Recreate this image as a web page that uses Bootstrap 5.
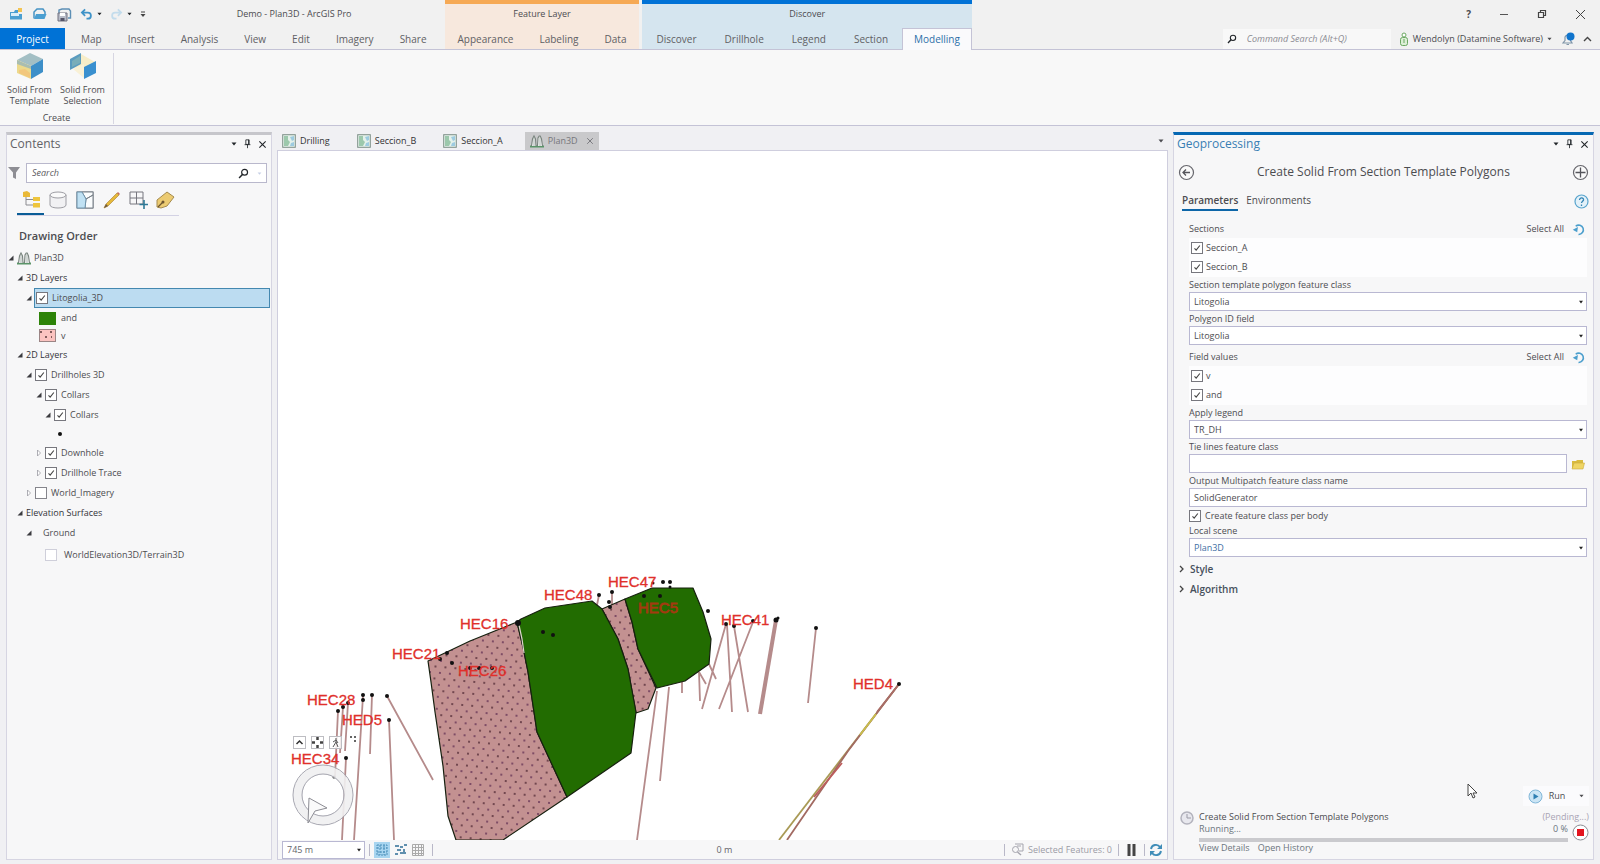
<!DOCTYPE html>
<html lang="en">
<head>
<meta charset="utf-8">
<meta name="viewport" content="width=device-width, initial-scale=1">
<title>Demo - Plan3D - ArcGIS Pro</title>
<link href="https://cdn.jsdelivr.net/npm/bootstrap@5.3.0/dist/css/bootstrap.min.css" rel="stylesheet">
<style>
  :root { --ink:#4c4c50; --line:#c4c3d6; --pane:#f7f7f8; }
  body { font-family:"Open Sans","Noto Sans",sans-serif; font-size:9px; line-height:12px; color:var(--ink); background:#f0f0f3; }
  a { color:inherit; text-decoration:none; }
  button { color:inherit; background:none; border:0; padding:0; display:inline-flex; align-items:center; justify-content:center; }
  svg { display:block; flex:none; }
  .app { min-height:100vh; }

  /* title bar and ribbon tabs */
  .topbar { background:#f1f1f1; border-bottom:1px solid var(--line); font-size:10px; }
  .maintabs { padding-right:5px; }
  .cap { height:28px; }
  .docname { font-size:9px; margin-right:88px; }
  .undo { color:#3f93c8; }
  .redo { color:#c3dcec; }
  .user { font-size:9px; margin-right:2px; }
  .rtabs { height:21px; }
  .rtabs a { padding:0 13px; line-height:23px; color:#606064; }
  .rtabs a.file { width:65px; padding:0; text-align:center; background:#0072d6; color:#fff; margin-right:3px; }
  .ctx { border-top:4px solid; margin-right:3px; }
  .ctx .cap { height:24px; font-size:9px; line-height:20px; text-align:center; }
  .ctx-layer { background:#f7e8dd; border-color:#f6a954; }
  .ctx-disc { background:#d5e5ef; border-color:#0072d6; }
  .ctx-disc .rtabs a { padding:0 14px; }
  .ctx-disc .rtabs a.on { background:#fafafc; color:#2c6fa8; border:1px solid var(--line); border-bottom:0; margin-bottom:-1px; padding:0 11px; line-height:21px; }
  .find { width:168px; height:20px; background:#f8f8f8; border:0; font-style:italic; font-size:9px; color:#777; outline:0; }
  .find::placeholder { color:#8a8a92; }
  .winbtns { gap:28px; padding-right:14px; }
  .ribbon { background:#f8f8f8; border-bottom:1px solid var(--line); height:76px; }
  .rgroup { width:114px; border-right:1px solid #d7d6e2; margin:3px 0 1px; }
  .rgroup > .d-flex { padding-left:3px; }
  .rbtn { width:53px; flex-direction:column; line-height:11px; gap:4px; }

  /* panes */
  .workspace { gap:5px; padding:6px; padding-bottom:4px; }
  .pane { background:var(--pane); border:1px solid #d6d5e2; }
  .pane-left { width:266px; border-top:3px solid #c6c6cb; }
  .pane-right { width:421px; border-top:3px solid #0668b3; position:relative; }
  .pane h2 { font-size:12px; line-height:18px; margin:0; font-weight:400; color:#626266; }
  .pane-right h2 { color:#3a7fb4; }
  .pane-head { height:20px; padding:0 4px 2px 3px; }
  .pane .tools { gap:7px; }
  .boxed { border:1px solid #b9b8cc; background:#fff; height:20px; }
  .boxed input { border:0; outline:0; background:none; font-size:9px; font-style:italic; padding:0 5px; min-width:0; }
  .boxed input::placeholder { color:#5a5a60; }
  .faint { color:#c5cfe5; }
  .viewtabs { margin-left:10px; width:162px; border-bottom:1px solid #d3d2e4; }
  .viewtabs button { width:27px; height:28px; padding-bottom:2px; }
  .viewtabs .on { border-bottom:2px solid #0a5d97; margin-bottom:-1px; }
  h3 { font-size:11px; line-height:16px; font-weight:600; margin:0; }

  /* layer tree */
  .tree { list-style:none; margin:4px 0 0; padding:0; }
  .tree li { height:20px; display:flex; align-items:center; gap:3px; }
  .tree .l0 { padding-left:1px; } .tree .l1 { padding-left:10px; } .tree .l2 { padding-left:19px; }
  .tree .l3 { padding-left:29px; } .tree .l4 { padding-left:38px; }
  .tree .sym { padding-left:32px; gap:5px; height:18px; }
  .tree .fill1 { height:20px; } .tree .fill2 { height:15px; }
  .tree .fill2 + li { margin-top:2px; }
  .tree .leaf { padding-left:38px; height:24px; gap:6px; }
  .tree label { padding-left:1px; }
  .tree .row-on { flex:1; height:20px; display:flex; align-items:center; gap:3px; background:#bcdcf1; border:1px solid #4488b0; margin:0 1px 0 -1px; padding-left:1px; }
  .tw { width:6px; height:8px; }
  .tree strong { font-weight:500; color:#333338; }
  .form-check-input { width:12px; height:12px; margin:0; border:1px solid #85858c; background-color:#fff; flex:none; }
  .form-check-input[type=checkbox] { border-radius:0; }
  .form-check-input:checked { background-color:#fff; border-color:#77777e;
    background-image:url("data:image/svg+xml,%3Csvg xmlns='http://www.w3.org/2000/svg' viewBox='0 0 12 12'%3E%3Cpath d='M3 6.4 5 8.6 9.4 3' fill='none' stroke='%23444' stroke-width='1.3'/%3E%3C/svg%3E"); }
  .form-check-input.dim { border-color:#cfcfda; }

  /* map view */
  .doctabs { height:18px; padding-left:5px; gap:23px; }
  .doctabs a { display:flex; align-items:center; gap:4px; color:#333; padding-right:4px; }
  .doctabs a.on { background:#c9c9cb; color:#77777c; padding:0 5px; gap:4px; margin-left:-5px; height:18px; }
  .view { border:1px solid #cfcede; background:#fff; min-height:0; }
  .scene { position:relative; overflow:hidden; min-height:0; background:#fff; }
  .scene > svg { position:absolute; left:0; top:0; width:100%; height:100%; }
  .hud { position:absolute; left:15px; bottom:91px; gap:5px; }
  .hud button { width:13px; height:13px; background:#ffffffcc; border:1px solid #bdbdc2; }
  .status { height:19px; background:#f7f7f8; color:#66666c; gap:4px; padding:0 4px; }
  .status .off { color:#9c9ca6; margin:0 2px; }
  .status .zoomtxt { padding-left:12px; }
  .status .pause { margin:0 4px; }
  .vr { width:1px; height:12px; min-height:0; align-self:center; background:#b9b8c8; opacity:1; }
  .status .hit { background:#a8d5f0; width:16px; height:16px; }

  .form-select, .form-control { font-size:9px; line-height:12px; height:19px; min-height:0; border:1px solid #b9b8d2; border-radius:0; background-color:#fff; color:var(--ink); padding:0 4px; box-shadow:none; }
  .form-select { background-image:url("data:image/svg+xml,%3Csvg xmlns='http://www.w3.org/2000/svg' viewBox='0 0 6 4'%3E%3Cpath d='M1 .8h4L3 3.4z' fill='%23222'/%3E%3C/svg%3E"); background-size:6px 4px; background-position:right 2px center; }
  .form-select.scale { color:#66666c; width:83px; height:18px; }
  .form-select.linked { color:#3f6fa5; }

  /* geoprocessing form */
  .gp-title { font-size:12px; line-height:18px; }
  .gp-tabs { gap:8px; font-size:10px; margin-top:10px; }
  .gp-tabs a { line-height:18px; height:20px; }
  .gp-tabs .on { font-weight:600; border-bottom:2px solid #0d66a8; }
  .gp-form { padding:6px 6px 0 15px; }
  .gp-form .lbl { display:block; line-height:12px; height:13px; margin-top:2px; }
  .gp-form .solo { display:flex; align-items:center; gap:4px; padding:3px 0; }
  .ticks { background:#fdfdfe; height:39px; padding-left:2px; }
  .ticks label { height:19px; display:flex; align-items:center; gap:3px; }
  .listhead { height:18px; padding-right:2px; }
  .mid { margin-top:3px; }
  .folds { margin-top:2px; }
  .fold { gap:6px; height:20px; font-size:10px; font-weight:600; color:#46505c; padding-left:5px; }
  .progress { height:4px; border-radius:0; background:#cacace; margin-top:3px; }
  .run { width:66px; height:20px; gap:6px; background:#fbfbfd; }
  .job { margin-top:5px; }
  .pend { color:#a9a4b4; }
  .joblinks { padding-bottom:5px; }
  .cursor { position:absolute; left:70%; bottom:60px; }
</style>
</head>
<body>
<svg width="0" height="0" class="position-absolute" aria-hidden="true">
  <defs>
    <symbol id="mag" viewBox="0 0 12 12"><circle cx="7.2" cy="4.6" r="3.2" fill="none" stroke="currentColor" stroke-width="1.3"/><path d="M4.8 7 1.2 10.8" stroke="currentColor" stroke-width="1.6"/></symbol>
    <symbol id="caret" viewBox="0 0 6 4"><path d="M.5.5h5L3 3.5z" fill="currentColor"/></symbol>
    <symbol id="pin" viewBox="0 0 8 12"><path d="M2 1h4v5.5H2zM.5 6.8h7M4 7v4M5.2 1v5" fill="none" stroke="currentColor"/></symbol>
    <symbol id="cross" viewBox="0 0 10 10"><path d="M1.5 1.5l7 7M8.500 1.500l-7 7" stroke="currentColor" stroke-width="1.200"/></symbol>
    <symbol id="open" viewBox="0 0 6 8"><path d="M5.500 1.500V6.500H.500z" fill="#3b3b3f"/></symbol>
    <symbol id="shut" viewBox="0 0 6 8"><path d="M1.500 1v6L4.500 4z" fill="#fff" stroke="#9a9aa2" stroke-width=".8"/></symbol>
    <symbol id="mapdoc" viewBox="0 0 14 14"><rect x=".7" y=".7" width="12.600" height="12.600" fill="#e4f1ea" stroke="#7d8f88"/><path d="M2 2h4v4l2 2-2 4H2z" fill="#9cc8ac"/><path d="M8 3l4-1v4l-2 1zM9 9l3-1v4H8z" fill="#9dcbe0"/></symbol>
    <symbol id="scn" viewBox="0 0 14 14"><path d="M0 12.500h14" stroke="#5a9468" stroke-width="2"/><path d="M1.500 12 2.500 5 4 2l1.500 3 .5 7M7.500 12 8 4l1.200-2h1L11.500 5l1 7" fill="#f0f2f1" stroke="#77827c" stroke-width="1.100"/><path d="M4 3v9M10 3v9" stroke="#9aa59f" stroke-width=".7"/></symbol>
    <symbol id="undo" viewBox="0 0 14 12"><path d="M5.500 1 2 4.500 5.500 8M2.500 4.500h6a3.200 3.200 0 0 1 0 6.500H7" fill="none" stroke="currentColor" stroke-width="1.900"/></symbol>
    <symbol id="reset" viewBox="0 0 14 14"><path d="M4 3.500a5 5 0 1 1 3 8.800" fill="none" stroke="#4c9fcd" stroke-width="1.700"/><path d="M.8 7.200 6.400 4.200 5.600 10z" fill="#4c9fcd"/></symbol>
    <pattern id="stip" width="10" height="12" patternUnits="userSpaceOnUse" patternTransform="rotate(5)">
      <rect width="10" height="12" fill="#c39191"/><circle cx="2" cy="3" r=".9" fill="#4b2430"/><circle cx="7" cy="9" r=".9" fill="#5e2c50"/>
    </pattern>
  </defs>
</svg>

<div class="app d-flex flex-column">
  <header>
    <div class="topbar d-flex">
      <div class="maintabs">
        <div class="cap d-flex align-items-center">
          <div class="d-flex align-items-center ps-2 gap-2">
            <button aria-label="New project"><svg width="16" height="14" viewBox="0 0 16 14"><path d="M2 12.500V5h4l1-2h3v4h4v5.500z" fill="#4b9fd1"/><path d="M3 6h8v3H3z" fill="#d9edf8"/><path d="M10 1h4v4h-4z" fill="#f3c453"/></svg></button>
            <button aria-label="Open project"><svg width="16" height="14" viewBox="0 0 16 14"><path d="M2 11.500V5l3-3h6l2 3v2" fill="none" stroke="#4593c4" stroke-width="1.500"/><path d="M2 12l2-5h10.500l-2 5z" fill="#4b9fd1"/></svg></button>
            <button aria-label="Save project"><svg width="16" height="15" viewBox="0 0 16 15"><path d="M3 7V3l3-1h7l1.500 2v7H12" fill="none" stroke="#5c8fb5" stroke-width="1.400"/><path d="M2 6h9v8H2z" fill="#b8bcc8" stroke="#71717f"/><path d="M4 6h5v3H4z" fill="#fff"/><path d="M4.500 11h4v3h-4z" fill="#555568"/></svg></button>
            <button aria-label="Undo" class="undo gap-1"><svg width="13" height="12"><use href="#undo"/></svg><svg class="text-dark" width="5" height="4"><use href="#caret"/></svg></button>
            <button aria-label="Redo" class="redo gap-1"><svg width="13" height="12" viewBox="0 0 14 12"><path d="M8.500 1 12 4.500 8.500 8M11.500 4.500h-6a3.200 3.200 0 0 0 0 6.500H7" fill="none" stroke="currentColor" stroke-width="1.900"/></svg><svg class="text-dark" width="5" height="4"><use href="#caret"/></svg></button>
            <button aria-label="Customize"><svg width="6" height="7" viewBox="0 0 6 7"><path d="M1 1h4" stroke="#444"/><path d="M.5 3h5L3 6z" fill="#444"/></svg></button>
          </div>
          <span class="ms-auto docname">Demo - Plan3D - ArcGIS Pro</span>
        </div>
        <nav class="rtabs d-flex"><a href="#" class="file">Project</a><a href="#">Map</a><a href="#">Insert</a><a href="#">Analysis</a><a href="#">View</a><a href="#">Edit</a><a href="#">Imagery</a><a href="#">Share</a></nav>
      </div>
      <div class="ctx ctx-layer"><div class="cap">Feature Layer</div>
        <nav class="rtabs d-flex"><a href="#">Appearance</a><a href="#">Labeling</a><a href="#">Data</a></nav></div>
      <div class="ctx ctx-disc"><div class="cap">Discover</div>
        <nav class="rtabs d-flex"><a href="#">Discover</a><a href="#">Drillhole</a><a href="#">Legend</a><a href="#">Section</a><a href="#" class="on">Modelling</a></nav></div>
      <div class="flex-grow-1">
        <div class="cap winbtns d-flex justify-content-end align-items-center">
          <button aria-label="Help" class="fw-bold">?</button>
          <button aria-label="Minimize"><svg width="10" height="10"><path d="M1 5.500h8" stroke="#555"/></svg></button>
          <button aria-label="Restore"><svg width="10" height="10"><path d="M1.500 3.500h5v5h-5zM3.500 3.500v-2h5v5h-2" fill="none" stroke="#444" stroke-width="1.200"/></svg></button>
          <button aria-label="Close"><svg width="11" height="11"><path d="M1 1l9 9M10 1l-9 9" stroke="#444"/></svg></button>
        </div>
        <div class="rtabs d-flex justify-content-end align-items-center pe-2">
          <label class="find d-flex align-items-center ps-1 gap-2 me-2"><svg width="10" height="10" class="text-dark"><use href="#mag"/></svg><input class="find w-100" placeholder="Command Search (Alt+Q)" aria-label="Command Search"></label>
          <button class="user gap-1"><svg width="10" height="14" viewBox="0 0 10 14"><circle cx="5" cy="3" r="2" fill="#fff" stroke="#6ba862"/><rect x="1.500" y="5.500" width="7" height="8" rx="2" fill="#dcefd6" stroke="#6ba862"/><path d="M5 7v4" stroke="#6ba862"/></svg><span>Wendolyn (Datamine Software)</span><svg width="5" height="4"><use href="#caret"/></svg></button>
          <button aria-label="Notifications" class="ms-2 me-2"><svg width="13" height="14" viewBox="0 0 13 14"><path d="M1 11h9L8.500 8.500V5A3 3 0 0 0 3 5v3.500zM4.500 12.500h2.500" fill="none" stroke="#7f95a8" stroke-width="1.200"/><circle cx="8.500" cy="4.500" r="4" fill="#0f74cc"/></svg></button>
          <button aria-label="Collapse ribbon"><svg width="9" height="6" viewBox="0 0 9 6"><path d="M1 5l3.500-3.500L8 5" fill="none" stroke="#444" stroke-width="1.400"/></svg></button>
        </div>
      </div>
    </div>
    <div class="ribbon d-flex">
      <div class="rgroup d-flex flex-column justify-content-between">
        <div class="d-flex">
          <button class="rbtn"><svg width="28" height="27" viewBox="0 0 28 27"><path d="M1 7 14 0l13 6-12 7z" fill="#a3bfc4"/><path d="M1 7l14 6v13L1 20z" fill="#ecd98b"/><path d="M1 7l14 6v3L1 11z" fill="#a9bdb0"/><path d="M3 17l6-1 5 4v5L3 20z" fill="#f2c77c"/><path d="M15 13l12-7v13l-12 7z" fill="#3d8fc8"/></svg><span>Solid From<br>Template</span></button>
          <button class="rbtn"><svg width="28" height="27" viewBox="0 0 28 27"><path d="M12 1l14 8-11 8L4 14z" fill="#f6edc8"/><path d="M4 16l11-5v14z" fill="#f9f1d6"/><path d="M1 6l11-6v11L1 17z" fill="#5b9cbf"/><path d="M3 8l8-5v7l-8 4z" fill="#79aeb9"/><path d="M15 14l12-6v12l-12 6z" fill="#3a90cf"/></svg><span>Solid From<br>Selection</span></button>
        </div>
        <div class="text-center">Create</div>
      </div>
    </div>
  </header>

  <main class="workspace d-flex flex-grow-1">
    <aside class="pane pane-left flex-shrink-0">
      <div class="pane-head d-flex align-items-center"><h2 class="me-auto">Contents</h2>
        <div class="tools d-flex align-items-center text-dark"><button aria-label="Options"><svg width="6" height="4"><use href="#caret"/></svg></button><button aria-label="Pin"><svg width="7" height="10"><use href="#pin"/></svg></button><button aria-label="Close"><svg width="9" height="9"><use href="#cross"/></svg></button></div></div>
      <div class="d-flex align-items-center mt-2 me-1">
        <svg width="15" height="14" viewBox="0 0 15 14"><path d="M1 1h12L9 6.500V13l-3-1.500v-5z" fill="#8e8e94"/></svg>
        <label class="boxed flex-grow-1 d-flex align-items-center ms-1"><input class="flex-grow-1" placeholder="Search" aria-label="Search"><svg width="11" height="11" class="text-dark"><use href="#mag"/></svg><svg class="faint ms-2 me-1" width="5" height="3"><use href="#caret"/></svg></label>
      </div>
      <div class="viewtabs d-flex mt-1">
        <button class="on" aria-label="List by drawing order"><svg width="18" height="18" viewBox="0 0 18 18"><path d="M4 6v9h7M4 9.500h7" fill="none" stroke="#8b8b90"/><path d="M1 2l4-1 3 2v4H1z" fill="#e9b938"/><path d="M11 7h7v4h-7zM11 13h7v4.500h-7z" fill="#eec53d"/></svg></button>
        <button aria-label="List by data source"><svg width="18" height="18" viewBox="0 0 18 18"><path d="M1 4v10c0 4 16 4 16 0V4" fill="#f1f1f3" stroke="#9d9da3"/><ellipse cx="9" cy="4" rx="8" ry="3" fill="#fafafa" stroke="#9d9da3"/></svg></button>
        <button aria-label="List by selection"><svg width="18" height="18" viewBox="0 0 18 18"><rect x="1" y="1" width="16" height="16" fill="#d7ebf7" stroke="#7a828a" stroke-width="1.200"/><path d="M6 1l4 7 7-4V1zM10 8l-1 9h8V4z" fill="#fafcfd" stroke="#7a828a"/><path d="M1 17V1h5l4 7-1 9z" fill="#c0e1f3" stroke="#6e93ab"/></svg></button>
        <button aria-label="List by editing"><svg width="18" height="18" viewBox="0 0 18 18"><path d="M1 17l2-4L14 2l2 2L5 15z" fill="#e6b93a" stroke="#b18a3c" stroke-width=".7"/><path d="M14 2l1-1 2 2-1 1z" fill="#c46d5d"/><path d="M1 17l2-4 2 2z" fill="#6c5a45"/></svg></button>
        <button aria-label="List by snapping"><svg width="19" height="19" viewBox="0 0 19 19"><path d="M1 1h13v12H1zM7.500 1v12M1 7h13" fill="none" stroke="#77777f"/><path d="M15 9v9M10.500 13.500h9" stroke="#2d7896" stroke-width="1.600"/></svg></button>
        <button aria-label="List by labeling"><svg width="19" height="18" viewBox="0 0 19 18"><path d="M1 16V9L11 1l7 5-7 9-6 2z" fill="#eccb72" stroke="#a58b4e"/><path d="M2 16l5-5" stroke="#6e5630" stroke-width="1.200"/><circle cx="7" cy="11" r="1.500" fill="#6e5630"/></svg></button>
      </div>
      <h3 class="ms-2 ps-1 mt-2 pt-1">Drawing Order</h3>
      <ul class="tree">
        <li class="l0"><svg class="tw"><use href="#open"/></svg><svg width="14" height="14"><use href="#scn"/></svg><span>Plan3D</span></li>
        <li class="l1"><svg class="tw"><use href="#open"/></svg><strong>3D Layers</strong></li>
        <li class="l2"><svg class="tw"><use href="#open"/></svg><div class="row-on"><input class="form-check-input" type="checkbox" id="c1" checked><label for="c1">Litogolia_3D</label></div></li>
        <li class="sym fill1"><svg width="17" height="13"><rect width="17" height="13" fill="#2d8308"/></svg><span>and</span></li>
        <li class="sym fill2"><svg width="17" height="13"><rect x=".5" y=".5" width="16" height="12" fill="#fbc3c0" stroke="#9b8585"/><path d="M1 3h2M11 3h2M6 8h2M12 8h1" stroke="#5a3a3a" stroke-width="1.500"/></svg><span>v</span></li>
        <li class="l1"><svg class="tw"><use href="#open"/></svg><strong>2D Layers</strong></li>
        <li class="l2"><svg class="tw"><use href="#open"/></svg><input class="form-check-input" type="checkbox" id="c2" checked><label for="c2">Drillholes 3D</label></li>
        <li class="l3"><svg class="tw"><use href="#open"/></svg><input class="form-check-input" type="checkbox" id="c3" checked><label for="c3">Collars</label></li>
        <li class="l4"><svg class="tw"><use href="#open"/></svg><input class="form-check-input" type="checkbox" id="c4" checked><label for="c4">Collars</label></li>
        <li class="sym"><svg width="42" height="6"><circle cx="21" cy="3" r="2" fill="#111"/></svg></li>
        <li class="l3"><svg class="tw"><use href="#shut"/></svg><input class="form-check-input" type="checkbox" id="c5" checked><label for="c5">Downhole</label></li>
        <li class="l3"><svg class="tw"><use href="#shut"/></svg><input class="form-check-input" type="checkbox" id="c6" checked><label for="c6">Drillhole Trace</label></li>
        <li class="l2"><svg class="tw"><use href="#shut"/></svg><input class="form-check-input" type="checkbox" id="c7"><label for="c7">World_Imagery</label></li>
        <li class="l1"><svg class="tw"><use href="#open"/></svg><strong>Elevation Surfaces</strong></li>
        <li class="l2"><svg class="tw"><use href="#open"/></svg><span class="ps-2">Ground</span></li>
        <li class="leaf"><input class="form-check-input dim" type="checkbox" id="c8"><label for="c8">WorldElevation3D/Terrain3D</label></li>
      </ul>
    </aside>

    <section class="d-flex flex-column flex-grow-1">
      <div class="doctabs d-flex align-items-center">
        <a href="#"><svg width="14" height="14"><use href="#mapdoc"/></svg>Drilling</a>
        <a href="#"><svg width="14" height="14"><use href="#mapdoc"/></svg>Seccion_B</a>
        <a href="#"><svg width="14" height="14"><use href="#mapdoc"/></svg>Seccion_A</a>
        <a href="#" class="on"><svg width="14" height="14"><use href="#scn"/></svg>Plan3D<svg class="ms-1" width="8" height="8"><use href="#cross"/></svg></a>
        <button class="ms-auto me-1" aria-label="View list"><svg width="6" height="4"><use href="#caret"/></svg></button>
      </div>
      <div class="view d-flex flex-column flex-grow-1">
        <div class="scene flex-grow-1">
          <svg viewBox="278 150 889 691" preserveAspectRatio="xMinYMax slice" role="img" aria-label="3D scene with drillholes and solids">
            <g stroke="#b58b8b" stroke-width="1.800" fill="none">
              <path d="M338 712L335 778M343 708L340 754M348 704L345 752M363 697L354 841M372 696L370 755M387 697L433 781M389 721L394 841M346 759L342 841M599 596L597 606M612 593V606"/>
              <path d="M657 692L637 841M669 688L660 782M682 683V694M699 673L700 702M699 673L706 685M709 665L716 680M726 625L702 710M727 626L732 713M734 627L748 713M753 623L719 710M816 629L808 704"/>
              <path d="M776 621L760 715" stroke-width="4"/>
              <path d="M899 685L779 841" stroke="#a99a55"/><path d="M899 685L848 752L787 841" stroke="#a26a62"/>
              <path d="M876 715L860 736" stroke="#c9bf4c"/><path d="M842 764L814 798" stroke="#bd5c5c"/><path d="M899 685L877 713" stroke="#a96d68"/>
            </g>
            <g stroke="#16200f" stroke-width="1.200" stroke-linejoin="round">
              <path d="M428 662L470 642L517 623L523 648L528 673L537 733L567 798L503 841L456 841L448 817L443 767L435 713L431 683z" fill="url(#stip)"/>
              <path d="M602 610L625 600L632 623L638 650L656 689L648 710L636 714L628 670L618 640z" fill="url(#stip)"/>
              <path d="M517 623L521 620L545 609L592 602L602 610L618 640L628 670L636 713L631 754L567 798L537 733L528 673L523 648z" fill="#226c01"/>
              <path d="M625 600L652 589L693 589L703 613L711 640L709 665L685 682L657 689L638 650L632 623z" fill="#226c01"/>
              <path d="M519 626l3 14 2 14" stroke="#ddd4cd" fill="none"/>
            </g>
            <g fill="#111">
              <circle cx="338" cy="712" r="2"/><circle cx="343" cy="708" r="2"/><circle cx="348" cy="704" r="2"/><circle cx="363" cy="696" r="2"/><circle cx="363" cy="701" r="2"/><circle cx="372" cy="696" r="2"/><circle cx="387" cy="697" r="2"/><circle cx="389" cy="721" r="2"/><circle cx="346" cy="759" r="2"/><circle cx="334" cy="778" r="1.500"/>
              <circle cx="599" cy="596" r="2"/><circle cx="612" cy="593" r="2"/><circle cx="609" cy="603" r="2"/><circle cx="610" cy="608" r="2"/><circle cx="653" cy="584" r="1.500"/><circle cx="663" cy="583" r="2"/><circle cx="670" cy="583" r="2"/><circle cx="670" cy="588" r="1.500"/><circle cx="644" cy="597" r="2"/><circle cx="660" cy="597" r="2"/><circle cx="708" cy="612" r="2"/>
              <circle cx="518" cy="624" r="3"/><circle cx="543" cy="633" r="2"/><circle cx="553" cy="636" r="2"/><circle cx="440" cy="660" r="2"/><circle cx="447" cy="654" r="2"/><circle cx="452" cy="664" r="2"/><circle cx="470" cy="669" r="2"/><circle cx="479" cy="669" r="2"/><circle cx="492" cy="669" r="2"/>
              <circle cx="726" cy="625" r="2"/><circle cx="734" cy="627" r="2"/><circle cx="753" cy="622" r="2"/><circle cx="776" cy="621" r="2.500"/><circle cx="778" cy="619" r="1.500"/><circle cx="816" cy="629" r="2"/><circle cx="899" cy="685" r="2"/>
            </g>
            <g fill="#e0302b" stroke="#e0302b" stroke-width=".3" font-family="Liberation Sans, Arial, sans-serif" font-size="15">
              <text x="608" y="588">HEC47</text><text x="544" y="601">HEC48</text><text x="460" y="630">HEC16</text><text x="392" y="660">HEC21</text><text x="458" y="677">HEC26</text><text x="307" y="706">HEC28</text><text x="342" y="726">HED5</text><text x="291" y="765">HEC34</text><text x="721" y="626">HEC41</text><text x="853" y="690">HED4</text><text x="638" y="614" fill="#a33a10" stroke="#a33a10" stroke-width=".8">HEC5</text>
            </g>
            <path d="M350 738h2M354 738h2M354 742h2" stroke="#333" stroke-width="1.500"/>
            <circle cx="323" cy="796" r="25" fill="none" stroke="#efeff1" stroke-opacity=".9" stroke-width="9"/>
            <g fill="none" stroke="#a6a6b0"><circle cx="323" cy="796" r="30"/><circle cx="323" cy="796" r="21"/></g>
            <path d="M309 799L327 809L315 812L308 824z" fill="#fafafa" stroke="#8d8d94"/>
          </svg>
          <div class="hud d-flex">
            <button aria-label="Expand"><svg width="9" height="9"><path d="M1.500 6L4.500 3L7.500 6" fill="none" stroke="#333" stroke-width="1.500"/></svg></button>
            <button aria-label="Full control"><svg width="11" height="11"><path d="M5.500 0v3M5.500 8v3M0 5.500h3M8 5.500h3" stroke="#444" stroke-width="2.500"/></svg></button>
            <button aria-label="Walk"><svg width="9" height="11"><path d="M5 1v4L2 10M5 5l2 5M2 5l3-2 2 3" fill="none" stroke="#555"/></svg></button>
          </div>
        </div>
        <div class="status d-flex align-items-center">
          <select class="form-select scale" aria-label="Scale"><option>745 m</option></select>
          <span class="vr"></span>
          <button class="hit" aria-label="Constrain"><svg width="12" height="12"><path d="M1 1h10v10H1zM4 1v10M8 1v10M1 4h10M1 8h10" fill="none" stroke="#4b8fba" stroke-dasharray="2 1"/></svg></button>
          <button aria-label="Snapping"><svg width="14" height="12"><path d="M1 2h4M6 3h3M10 1h3M1 10h3M3 6h4M10 5v3M6 9h6" fill="none" stroke="#5f8fae" stroke-width="2"/></svg></button>
          <button aria-label="Grid"><svg width="12" height="12"><path d="M.5.5h11v11H.5zM3.500 0v12M6.500 0v12M9.500 0v12M0 3.500h12M0 6.500h12M0 9.500h12" fill="none" stroke="#aaa"/></svg></button>
          <span class="vr ms-1"></span>
          <span class="mx-auto zoomtxt">0 m</span>
          <span class="vr"></span>
          <span class="off d-flex align-items-center gap-1"><svg width="13" height="13"><path d="M4 1h8v7H8M6 3h4" fill="none" stroke="#a5a5ae"/><circle cx="4.500" cy="6.500" r="3" fill="none" stroke="#a5a5ae"/><path d="M6.500 9L10 12" stroke="#a5a5ae" stroke-width="1.500"/></svg>Selected Features: 0</span>
          <span class="vr"></span>
          <button class="pause" aria-label="Pause drawing"><svg width="9" height="12"><path d="M2 0v12M7 0v12" stroke="#444" stroke-width="3"/></svg></button>
          <span class="vr"></span>
          <button aria-label="Refresh"><svg width="14" height="14" viewBox="0 0 14 14"><path d="M2 6a5 5 0 0 1 9-2M12 8a5 5 0 0 1-9 2" fill="none" stroke="#3f8db8" stroke-width="1.900"/><path d="M13 1v5H8zM1 13V8h5z" fill="#3f8db8"/></svg></button>
        </div>
      </div>
    </section>

    <aside class="pane pane-right flex-shrink-0 d-flex flex-column">
      <div class="pane-head d-flex align-items-center"><h2 class="me-auto">Geoprocessing</h2>
        <div class="tools d-flex align-items-center text-dark"><button aria-label="Options"><svg width="6" height="4"><use href="#caret"/></svg></button><button aria-label="Pin"><svg width="7" height="10"><use href="#pin"/></svg></button><button aria-label="Close"><svg width="9" height="9"><use href="#cross"/></svg></button></div></div>
      <div class="d-flex align-items-center justify-content-between px-1 mt-2">
        <button aria-label="Back"><svg width="17" height="17"><circle cx="8.500" cy="8.500" r="7" fill="#fafafa" stroke="#66666c" stroke-width="1.200"/><path d="M12 8.500H5.500M8 5.500l-3 3 3 3" fill="none" stroke="#55555b" stroke-width="1.300"/></svg></button>
        <span class="gp-title">Create Solid From Section Template Polygons</span>
        <button aria-label="Add"><svg width="17" height="17"><circle cx="8.500" cy="8.500" r="7" fill="#fafafa" stroke="#66666c" stroke-width="1.200"/><path d="M8.500 3.500v10M3.500 8.500h10" stroke="#55555b" stroke-width="1.300"/></svg></button>
      </div>
      <div class="gp-tabs d-flex ps-2 pe-1"><a href="#" class="on">Parameters</a><a href="#">Environments</a>
        <button class="ms-auto" aria-label="Help"><svg width="15" height="15"><circle cx="7.500" cy="7.500" r="6.500" fill="#e3f1f9" stroke="#58a4cd" stroke-width="1.200"/><path d="M5.500 6c0-3 4.500-2.500 4 0-.3 1.200-2 1.300-2 3M7.500 10.500v1.500" fill="none" stroke="#3485b5" stroke-width="1.300"/></svg></button></div>
      <form class="gp-form">
        <div class="listhead mid d-flex align-items-center"><span class="me-auto">Sections</span><button type="button" class="gap-2">Select All<svg width="13" height="13"><use href="#reset"/></svg></button></div>
        <div class="ticks"><label><input class="form-check-input" type="checkbox" checked>Seccion_A</label><label><input class="form-check-input" type="checkbox" checked>Seccion_B</label></div>
        <label class="lbl" for="f1">Section template polygon feature class</label>
        <select class="form-select" id="f1"><option>Litogolia</option></select>
        <label class="lbl" for="f2">Polygon ID field</label>
        <select class="form-select" id="f2"><option>Litogolia</option></select>
        <div class="listhead mid d-flex align-items-center"><span class="me-auto">Field values</span><button type="button" class="gap-2">Select All<svg width="13" height="13"><use href="#reset"/></svg></button></div>
        <div class="ticks"><label><input class="form-check-input" type="checkbox" checked>v</label><label><input class="form-check-input" type="checkbox" checked>and</label></div>
        <label class="lbl" for="f3">Apply legend</label>
        <select class="form-select" id="f3"><option>TR_DH</option></select>
        <label class="lbl" for="f4">Tie lines feature class</label>
        <div class="d-flex align-items-center gap-1"><input class="form-control" id="f4"><button type="button" aria-label="Browse"><svg width="16" height="12"><path d="M1 10V3h4l1-1h6v8z" fill="#d9bb3f"/><path d="M1 11l2-6h10.500l-1.500 6z" fill="#efd564" stroke="#c9ab3c" stroke-width=".6"/></svg></button></div>
        <label class="lbl" for="f5">Output Multipatch feature class name</label>
        <input class="form-control" id="f5" value="SolidGenerator">
        <label class="solo"><input class="form-check-input" type="checkbox" checked>Create feature class per body</label>
        <label class="lbl mt-0" for="f6">Local scene</label>
        <select class="form-select linked" id="f6"><option>Plan3D</option></select>
      </form>
      <div class="folds">
        <button class="fold d-flex"><svg width="5" height="8"><path d="M1 1l3 3-3 3" fill="none" stroke="#444" stroke-width="1.300"/></svg>Style</button>
        <button class="fold d-flex"><svg width="5" height="8"><path d="M1 1l3 3-3 3" fill="none" stroke="#444" stroke-width="1.300"/></svg>Algorithm</button>
      </div>
      <div class="mt-auto px-1">
        <div class="d-flex justify-content-end"><button class="run"><svg width="15" height="15"><circle cx="7.500" cy="7.500" r="6.500" fill="#cbe5f5" stroke="#80b6d8"/><path d="M5.500 4.500v6l5-3z" fill="#2e7fb2"/></svg>Run<svg class="ms-2" width="5" height="4"><use href="#caret"/></svg></button></div>
        <div class="job d-flex">
          <svg width="17" height="16"><circle cx="9" cy="7" r="6" fill="#e8e8ee" stroke="#b3b3bd" stroke-width="1.500"/><path d="M9 3v4h4" fill="none" stroke="#9a9aa5"/></svg>
          <div class="flex-grow-1 ps-1">
            <div class="d-flex justify-content-between"><span>Create Solid From Section Template Polygons</span><span class="pend">(Pending...)</span></div>
            <div class="d-flex align-items-center">
              <div class="flex-grow-1"><div class="d-flex justify-content-between text-secondary"><span>Running...</span><span>0 %</span></div><div class="progress"></div></div>
              <button class="ms-1" aria-label="Cancel"><svg width="17" height="17"><circle cx="8.500" cy="8.500" r="7.500" fill="#fff" stroke="#8a8a90"/><path d="M5 5h7v7H5z" fill="#e3141e"/></svg></button>
            </div>
            <div class="joblinks d-flex gap-2 text-secondary"><a href="#">View Details</a><a href="#">Open History</a></div>
          </div>
        </div>
      </div>
      <svg class="cursor" width="11" height="16"><path d="M1 1v12l3-3 2 5 2-1-2-4h4z" fill="#fff" stroke="#444"/></svg>
    </aside>
  </main>
</div>
<script src="https://cdn.jsdelivr.net/npm/bootstrap@5.3.0/dist/js/bootstrap.bundle.min.js"></script>
</body>
</html>
